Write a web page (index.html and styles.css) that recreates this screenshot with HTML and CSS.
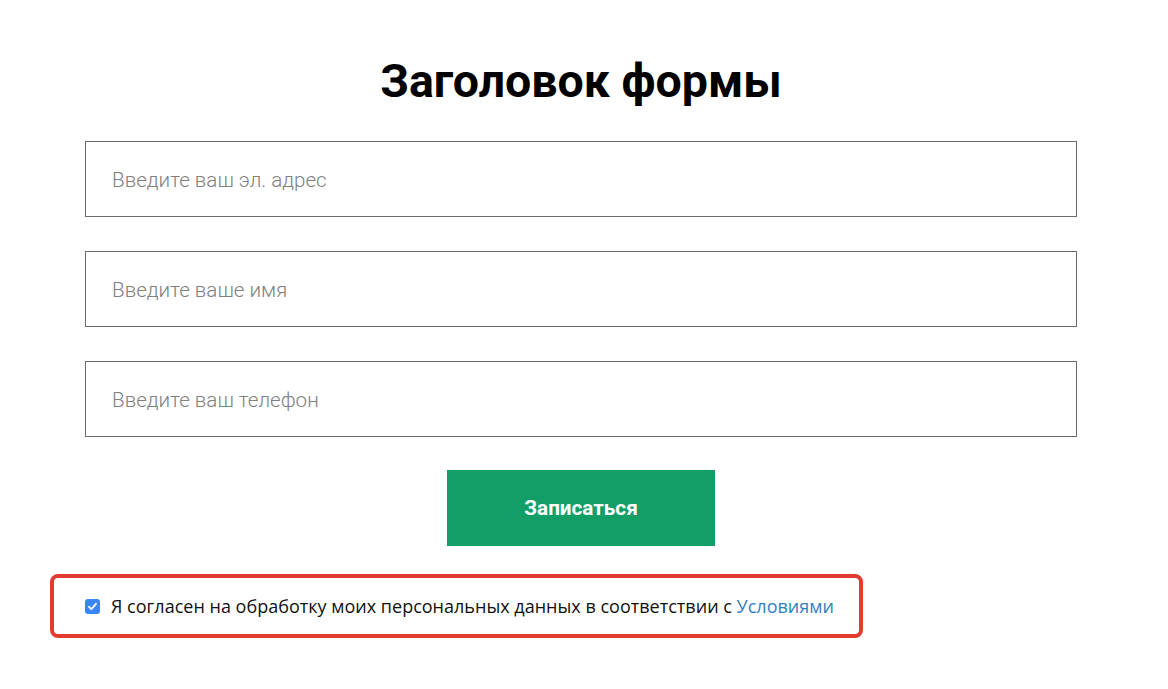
FILE: index.html
```html
<!DOCTYPE html>
<html lang="ru">
<head>
<meta charset="utf-8">
<title>Форма</title>
<link rel="stylesheet" href="styles.css">
</head>
<body>
<main class="page">
  <form class="form">
    <h1 class="title">Заголовок формы</h1>
    <div class="field"><input class="input" type="email" placeholder="Введите ваш эл. адрес"></div>
    <div class="field"><input class="input" type="text" placeholder="Введите ваше имя"></div>
    <div class="field"><input class="input" type="tel" placeholder="Введите ваш телефон"></div>
    <div class="actions"><button class="btn" type="button">Записаться</button></div>
    <div class="consent">
      <label class="consent-label">
        <span class="check"><svg width="15" height="15" viewBox="0 0 15 15"><rect x="0" y="0" width="15" height="15" rx="3" fill="#3b86f7"/><path d="M4 7.8 L6.4 10.2 L11 4.8" fill="none" stroke="#fff" stroke-width="1.8" stroke-linecap="round" stroke-linejoin="round"/></svg></span>
        <span class="consent-text">Я согласен на обработку моих персональных данных в соответствии с <a class="link" href="#">Условиями</a></span>
      </label>
    </div>
  </form>
</main>
</body>
</html>
```
FILE: styles.css
```css
* { box-sizing: border-box; }
html, body { margin: 0; padding: 0; background: #fff; }
body { font-family: Roboto, "Liberation Sans", sans-serif; color: #000; }
.page { padding-left: 85px; width: 1077px; }
.form { display: flex; flex-direction: column; }
.title {
  margin: 51px 0 0;
  text-align: center;
  font-family: Roboto, sans-serif;
  font-weight: 700;
  font-size: 46.5px;
  line-height: 60px;
  height: 90px;
}
.field { height: 76px; margin-bottom: 34px; }
.field:nth-child(4) { margin-bottom: 33px; }
.input {
  display: block;
  width: 992px;
  height: 76px;
  border: 1px solid #6b6b6b;
  padding: 2px 26px 0 26px;
  font-family: Roboto, sans-serif;
  font-weight: 300;
  font-size: 20.6px;
  color: #333;
  background: #fff;
  outline: none;
}
.input::placeholder { color: #808080; }
.actions { display: flex; justify-content: center; }
.btn {
  width: 268px;
  height: 76px;
  border: none;
  background: #139e68;
  color: #fff;
  font-family: Roboto, sans-serif;
  font-weight: 700;
  font-size: 20.7px;
}
.consent {
  margin: 28px 0 0 -35px;
  width: 813px;
  height: 64px;
  border: 4px solid #e23b30;
  border-radius: 8px;
  display: flex;
  align-items: center;
  padding-left: 31px;
}
.consent-label { display: flex; align-items: center; gap: 11px; }
.check { display: block; width: 15px; height: 15px; }
.check svg { display: block; }
.consent-text {
  font-family: "Open Sans", "Noto Sans", sans-serif;
  font-size: 18px;
  letter-spacing: 0.01px;
  color: #111;
}
.link { color: #2f7fc1; text-decoration: none; }
```
